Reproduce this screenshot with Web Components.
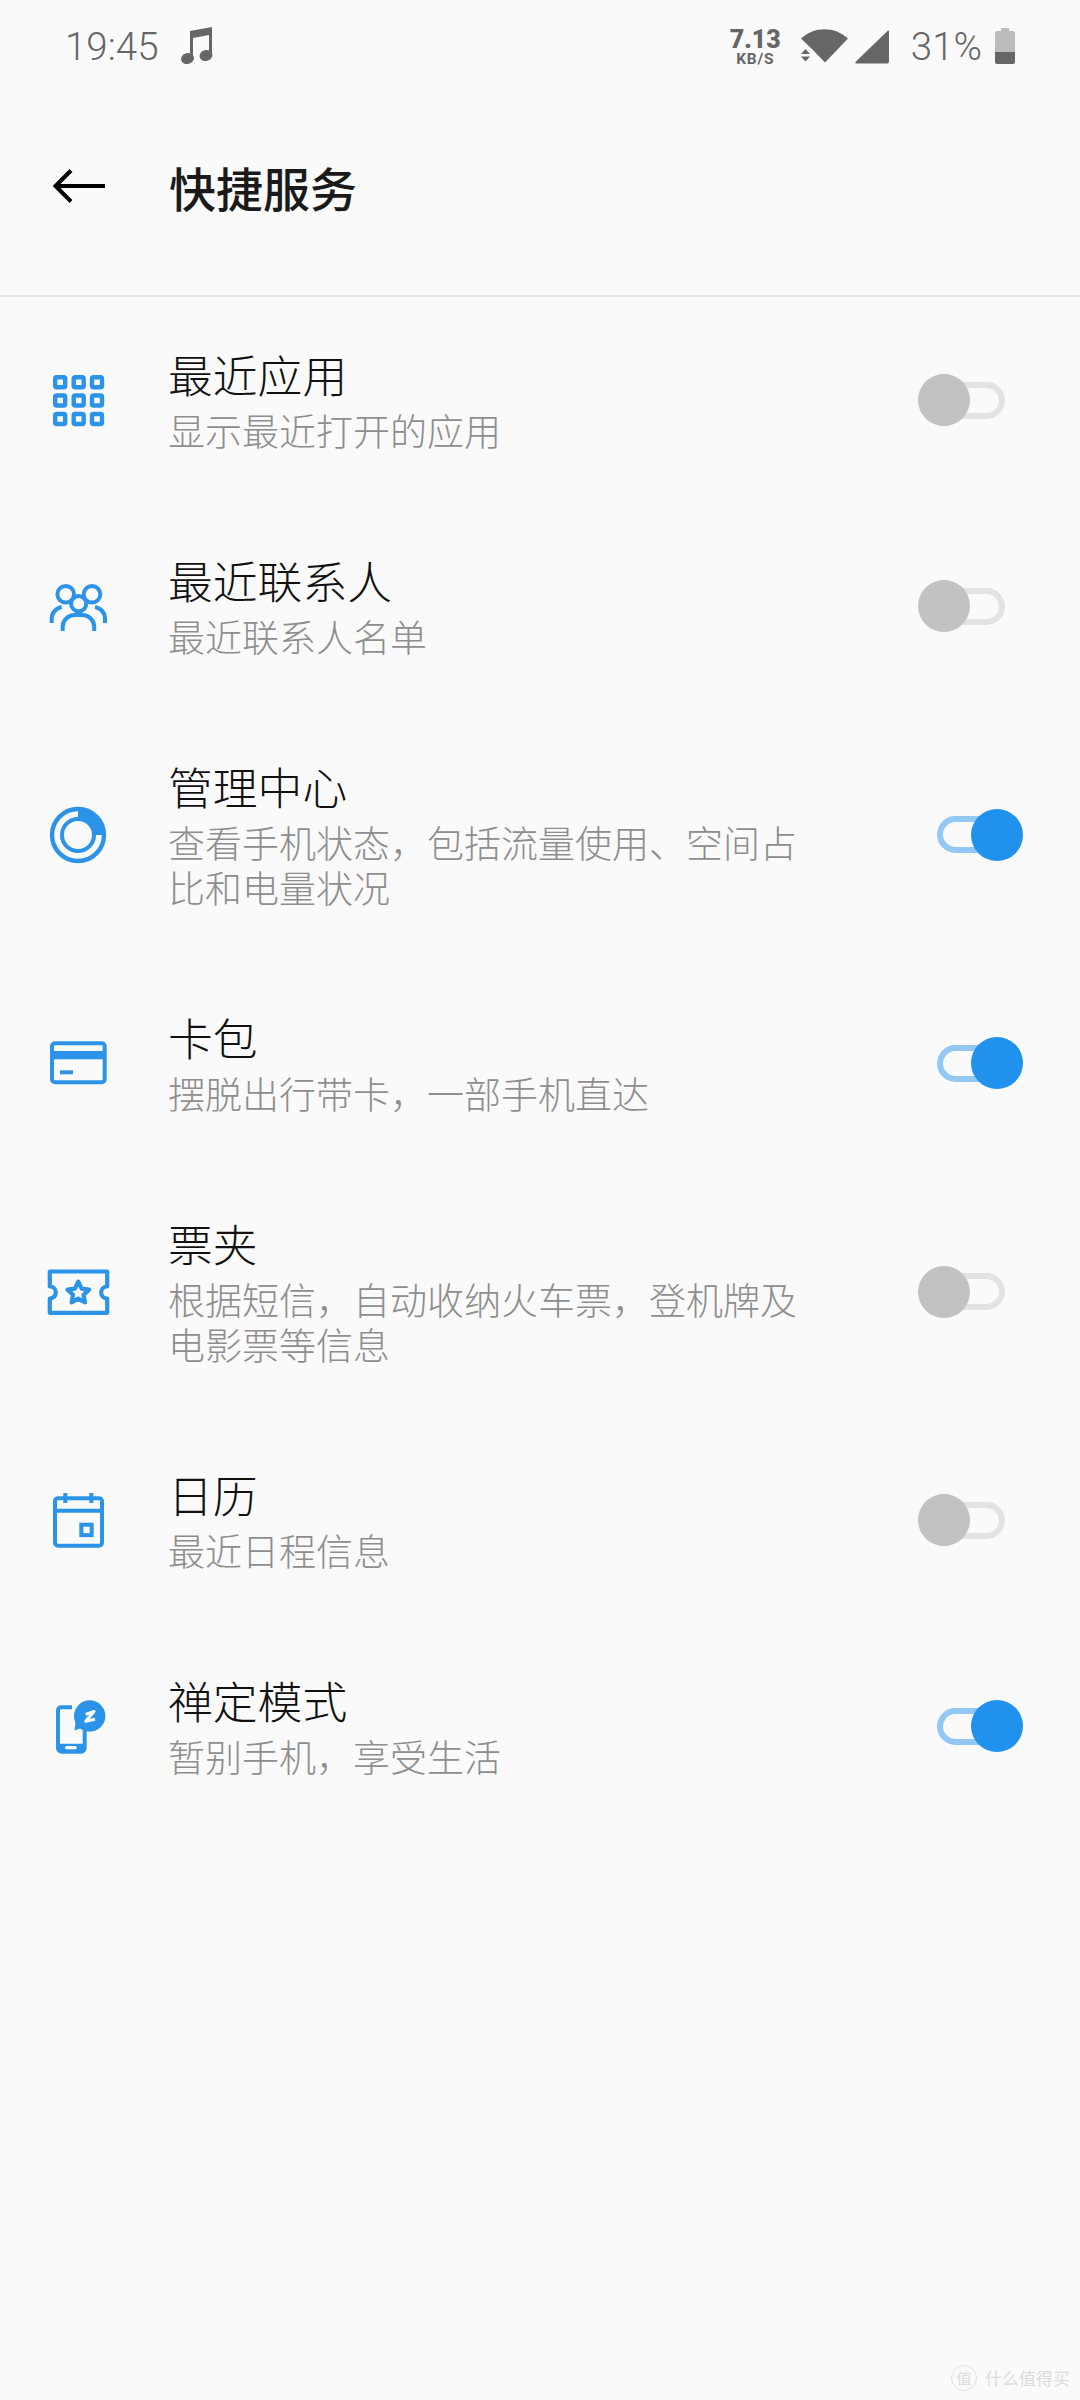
<!DOCTYPE html>
<html lang="zh-CN">
<head>
<meta charset="utf-8">
<title>快捷服务</title>
<style>
    html, body {
        margin: 0;
        background: #fafafa;
    }
    body {
        width: 1080px;
        height: 2400px;
        overflow: hidden;
        position: relative;
        font-family: "Noto Sans CJK SC", "Noto Sans", sans-serif;
    }
    svg {
        display: block;
    }
</style>
</head>
<body>
<status-bar></status-bar>
<app-bar>快捷服务</app-bar>
<service-list>
    <service-row>
        <svg slot="icon" width="64" height="64" viewBox="0 0 64 64" fill="none" stroke="#2b94e8" stroke-width="4.4">
            <rect x="9.2" y="9.2" width="10" height="10" rx="1.5"/><rect x="27.7" y="9.2" width="10" height="10" rx="1.5"/><rect x="46" y="9.2" width="10" height="10" rx="1.5"/>
            <rect x="9.2" y="27.5" width="10" height="10" rx="1.5"/><rect x="27.7" y="27.5" width="10" height="10" rx="1.5"/><rect x="46" y="27.5" width="10" height="10" rx="1.5"/>
            <rect x="9.2" y="46" width="10" height="10" rx="1.5"/><rect x="27.7" y="46" width="10" height="10" rx="1.5"/><rect x="46" y="46" width="10" height="10" rx="1.5"/>
        </svg>
        <span slot="title">最近应用</span>
        显示最近打开的应用
    </service-row>
    <service-row>
        <svg slot="icon" width="64" height="64" viewBox="0 0 64 64" fill="none" stroke="#2b94e8" stroke-width="4">
            <circle cx="19.7" cy="20.3" r="8.3"/>
            <circle cx="46" cy="20.3" r="8.3"/>
            <path d="M5.7 49v-4a12 12 0 0 1 10-12M59 49v-4a12 12 0 0 0-10-12"/>
            <circle cx="32.7" cy="29.7" r="7.6" fill="#fafafa"/>
            <path d="M16.7 57v-4a12 12 0 0 1 12-12h7.5a12 12 0 0 1 12 12v4" fill="#fafafa"/>
        </svg>
        <span slot="title">最近联系人</span>
        最近联系人名单
    </service-row>
    <service-row on>
        <svg slot="icon" width="64" height="64" viewBox="0 0 64 64" fill="none" stroke="#2b94e8">
            <circle cx="32" cy="32" r="26" stroke-width="4.4"/>
            <circle cx="32" cy="32" r="16" stroke-width="4"/>
            <path d="M32 6a26 26 0 0 1 26 26H48A16 16 0 0 0 32 16z" fill="#2b94e8" stroke="none"/>
        </svg>
        <span slot="title">管理中心</span>
        查看手机状态，包括流量使用、空间占比和电量状况
    </service-row>
    <service-row on>
        <svg slot="icon" width="64" height="64" viewBox="0 0 64 64" fill="none">
            <rect x="6" y="12.3" width="52.7" height="39" rx="3" stroke="#2b94e8" stroke-width="4"/>
            <rect x="6" y="20" width="52.7" height="8.3" fill="#2b94e8"/>
            <rect x="14" y="39.3" width="13" height="4" fill="#2b94e8"/>
        </svg>
        <span slot="title">卡包</span>
        摆脱出行带卡，一部手机直达
    </service-row>
    <service-row>
        <svg slot="icon" width="64" height="64" viewBox="0 0 64 64" fill="none" stroke="#2b94e8" stroke-width="4.2" stroke-linejoin="round">
            <path d="M3.8 11.5H61.2V26.5a6 6 0 0 0 0 12V52.8H3.8V38.5a6 6 0 0 0 0-12z"/>
            <path d="M32.3 21.7l3.3 6.9 7.5 1-5.5 5.2 1.4 7.5-6.7-3.6-6.7 3.6 1.4-7.5-5.5-5.2 7.5-1z"/>
        </svg>
        <span slot="title">票夹</span>
        根据短信，自动收纳火车票，登机牌及电影票等信息
    </service-row>
    <service-row>
        <svg slot="icon" width="64" height="64" viewBox="0 0 64 64" fill="none" stroke="#2b94e8" stroke-width="4">
            <rect x="9" y="10.3" width="47" height="47.4" rx="3"/>
            <path d="M9 22.7H56M19.3 5V15M45.3 5V15"/>
            <rect x="35.3" y="36.7" width="10.4" height="10.4"/>
        </svg>
        <span slot="title">日历</span>
        最近日程信息
    </service-row>
    <service-row on>
        <svg slot="icon" width="64" height="64" viewBox="0 0 64 64" fill="none">
            <path d="M26 13.3H15a3 3 0 0 0-3 3V54a3.700 3.700 0 0 0 3.700 3.700H35a3.700 3.700 0 0 0 3.700-3.700V35" stroke="#2b94e8" stroke-width="4"/>
            <path d="M12 49.700H38.700V54a3.700 3.700 0 0 1-3.700 3.700H15.700A3.700 3.700 0 0 1 12 54z" fill="#2b94e8"/>
            <rect x="19" y="52" width="11.700" height="3.300" rx="1.600" fill="#fafafa"/>
            <circle cx="43.700" cy="22" r="15.700" fill="#2b94e8"/>
            <path d="M28.500 36.500l1-8 6 5.500z" fill="#2b94e8"/>
            <path d="M39.700 20.300L48 17.500 39.700 27.300 49 25.300" stroke="#fafafa" stroke-width="3" stroke-linejoin="round"/>
        </svg>
        <span slot="title">禅定模式</span>
        暂别手机，享受生活
    </service-row>
</service-list>
<water-mark></water-mark>

<script>
class StatusBarElement extends HTMLElement {
    constructor() {
        super();
        this.attachShadow({ mode: 'open' });
        this.shadowRoot.innerHTML = `
            <style>
                :host {
                    display: flex;
                    align-items: center;
                    justify-content: space-between;
                    height: 92px;
                    box-sizing: border-box;
                    padding: 0 65px 0 65px;
                    color: #666;
                    font-family: Roboto, sans-serif;
                }
                .side {
                    display: flex;
                    align-items: center;
                }
                .clock, .pct {
                    font-size: 38.5px;
                    font-weight: 300;
                }
                .speed {
                    display: flex;
                    flex-direction: column;
                    align-items: center;
                    font-weight: 700;
                    margin-right: 20px;
                }
                .speed b { font-size: 25px; line-height: 25px; }
                .speed i { font-size: 15.5px; line-height: 14px; font-style: normal; letter-spacing: .8px; }
                svg { display: block; }
            </style>
            <div class="side">
                <span class="clock">19:45</span>
                <svg style="margin-left:21px" width="34" height="40" viewBox="0 0 34 40" fill="#666">
                    <ellipse cx="7.500" cy="32.500" rx="6.500" ry="5.500" transform="rotate(-15 7.500 32.500)"/>
                    <ellipse cx="26" cy="29.500" rx="6.500" ry="5.500" transform="rotate(-15 26 29.500)"/>
                    <path d="M10 5 32 1V29H29V9L13 12V32H10z"/>
                </svg>
            </div>
            <div class="side">
                <div class="speed"><b>7.13</b><i>KB/S</i></div>
                <svg width="48" height="34" viewBox="0 0 48 34" fill="#666">
                    <path d="M0 9.500C13 -3 34 -3 47 9.500L24 33.500 11 20z"/>
                    <path d="M4.500 20l4.500 5H0zM0 27.500H9L4.500 32.500z"/>
                </svg>
                <svg style="margin-left:6px" width="34" height="35" viewBox="0 0 34 35" fill="#666">
                    <path d="M33 1.500a1 1 0 0 1 1 .5V32.500a2 2 0 0 1-2 2H1.500a1 1 0 0 1-.8-1.700z"/>
                </svg>
                <span class="pct" style="margin-left:22px">31%</span>
                <svg style="margin-left:13px" width="20" height="36" viewBox="0 0 20 36">
                    <path d="M6 0h8v3h4a2 2 0 0 1 2 2V24H0V5a2 2 0 0 1 2-2h4z" fill="#bcbcbc"/>
                    <path d="M0 24H20V34a2 2 0 0 1-2 2H2a2 2 0 0 1-2-2z" fill="#666"/>
                </svg>
            </div>
        `;
    }
}
customElements.define('status-bar', StatusBarElement);

class AppBarElement extends HTMLElement {
    constructor() {
        super();
        this.attachShadow({ mode: 'open' });
        this.shadowRoot.innerHTML = `
            <style>
                :host {
                    display: flex;
                    align-items: center;
                    height: 205px;
                    box-sizing: border-box;
                    padding: 0 0 15px 52px;
                    border-bottom: 2px solid #e6e6e6;
                }
                svg { display: block; }
                span {
                    margin-left: 63px;
                    font-size: 47px;
                    font-weight: 500;
                    color: #1a1a1a;
                }
            </style>
            <svg width="54" height="36" viewBox="0 0 54 36" fill="none" stroke="#000" stroke-width="4">
                <path d="M53 18H4M19 2.500 3.500 18 19 33.500"/>
            </svg>
            <span><slot></slot></span>
        `;
    }
}
customElements.define('app-bar', AppBarElement);

class ServiceListElement extends HTMLElement {
    constructor() {
        super();
        this.attachShadow({ mode: 'open' });
        this.shadowRoot.innerHTML = `
            <style>
                :host {
                    display: flex;
                    flex-direction: column;
                }
            </style>
            <slot></slot>
        `;
    }
}
customElements.define('service-list', ServiceListElement);

class ServiceRowElement extends HTMLElement {
    constructor() {
        super();
        this.attachShadow({ mode: 'open' });
        this.shadowRoot.innerHTML = `
            <style>
                :host {
                    display: flex;
                    align-items: center;
                    box-sizing: border-box;
                    padding: 43px 57px 43px 46px;
                }
                .icon {
                    flex: none;
                    width: 64px;
                    height: 64px;
                    margin-right: 58px;
                }
                .text {
                    width: 650px;
                    flex: none;
                    padding-bottom: 7px;
                }
                .title {
                    font-size: 44.8px;
                    line-height: 68px;
                    font-weight: 300;
                    color: #111;
                }
                .sub {
                    font-size: 37px;
                    line-height: 45px;
                    font-weight: 300;
                    color: #8e8e8e;
                }
                toggle-switch {
                    margin-left: auto;
                }
            </style>
            <div class="icon"><slot name="icon"></slot></div>
            <div class="text">
                <div class="title"><slot name="title"></slot></div>
                <div class="sub"><slot></slot></div>
            </div>
            <toggle-switch></toggle-switch>
        `;
    }

    connectedCallback() {
        this.shadowRoot.querySelector('toggle-switch').toggleAttribute('on', this.hasAttribute('on'));
    }
}

class ToggleSwitchElement extends HTMLElement {
    constructor() {
        super();
        this.attachShadow({ mode: 'open' });
        this.shadowRoot.innerHTML = `
            <style>
                :host {
                    display: flex;
                    justify-content: center;
                    align-items: center;
                    position: relative;
                    width: 105px;
                    height: 52px;
                    flex: none;
                }
                .track {
                    width: 68px;
                    height: 37px;
                    box-sizing: border-box;
                    border: 6px solid #e3e3e3;
                    border-radius: 19px;
                }
                .knob {
                    position: absolute;
                    top: 0;
                    left: 0;
                    width: 52px;
                    height: 52px;
                    border-radius: 50%;
                    background: #c2c2c2;
                }
                :host([on]) .track { border-color: #93c7f4; }
                :host([on]) .knob { left: auto; right: 0; background: #2191ee; }
            </style>
            <div class="track"></div>
            <div class="knob"></div>
        `;
    }
}
customElements.define('toggle-switch', ToggleSwitchElement);
customElements.define('service-row', ServiceRowElement);

class WaterMarkElement extends HTMLElement {
    constructor() {
        super();
        this.attachShadow({ mode: 'open' });
        this.shadowRoot.innerHTML = `
            <style>
                :host {
                    position: absolute;
                    left: 951px;
                    top: 2365px;
                    display: flex;
                    align-items: center;
                    gap: 8px;
                    color: #dcdcdc;
                    font-family: "Noto Sans CJK SC", sans-serif;
                }
                .badge {
                    width: 24px;
                    height: 24px;
                    border: 1px solid #e2e2e2;
                    border-radius: 50%;
                    font-size: 15px;
                    line-height: 24px;
                    text-align: center;
                }
                .name { font-size: 17px; line-height: 24px; }
            </style>
            <span class="badge">值</span>
            <span class="name">什么值得买</span>
        `;
    }
}
customElements.define('water-mark', WaterMarkElement);
</script>
</body>
</html>
